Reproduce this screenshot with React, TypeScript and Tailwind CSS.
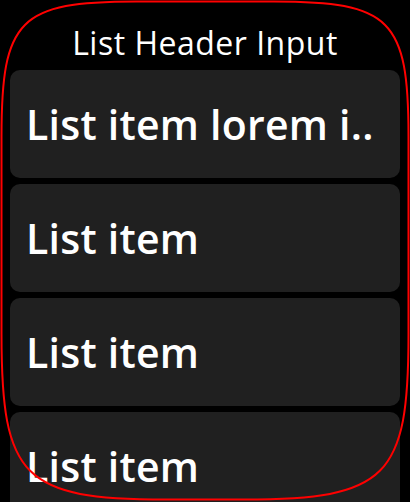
import React from "react";

const items = ["List item lorem i..", "List item", "List item", "List item"];

function Outline() {
  // squircle-like rounded outline drawn over the content
  const L = 1.5, T = 1.5, R = 408.5, B = 499.5;
  const rt = 135, rb = 165, k = 0.13;
  const d = [
    `M ${L + rt} ${T}`,
    `L ${R - rt} ${T}`,
    `C ${R - rt * k} ${T} ${R} ${T + rt * k} ${R} ${T + rt}`,
    `L ${R} ${B - rb}`,
    `C ${R} ${B - rb * k} ${R - rb * k} ${B} ${R - rb} ${B}`,
    `L ${L + rb} ${B}`,
    `C ${L + rb * k} ${B} ${L} ${B - rb * k} ${L} ${B - rb}`,
    `L ${L} ${T + rt}`,
    `C ${L} ${T + rt * k} ${L + rt * k} ${T} ${L + rt} ${T}`,
    "Z",
  ].join(" ");
  return (
    <svg
      className="pointer-events-none absolute left-0 top-0"
      width={410}
      height={502}
      viewBox="0 0 410 502"
    >
      <path d={d} fill="none" stroke="#ff0000" strokeWidth={2} />
    </svg>
  );
}

export default function App() {
  return (
    <div
      className="relative h-[502px] w-[410px] overflow-hidden bg-black text-white"
      style={{ fontFamily: '"Open Sans", "Noto Sans", sans-serif' }}
    >
      <div className="flex h-[70px] justify-center pt-[24px]">
        <span className="text-[32px] leading-[38px] tracking-[0.5px]">List Header Input</span>
      </div>
      <div className="flex flex-col gap-[6px] px-[10px]">
        {items.map((t, i) => (
          <div
            key={i}
            className="flex h-[108px] shrink-0 items-center rounded-[10px] bg-[#202020] px-[16px]"
          >
            <span className="whitespace-nowrap text-[41px] font-semibold leading-[41px] tracking-[0.25px]">
              {t}
            </span>
          </div>
        ))}
      </div>
      <Outline />
    </div>
  );
}
